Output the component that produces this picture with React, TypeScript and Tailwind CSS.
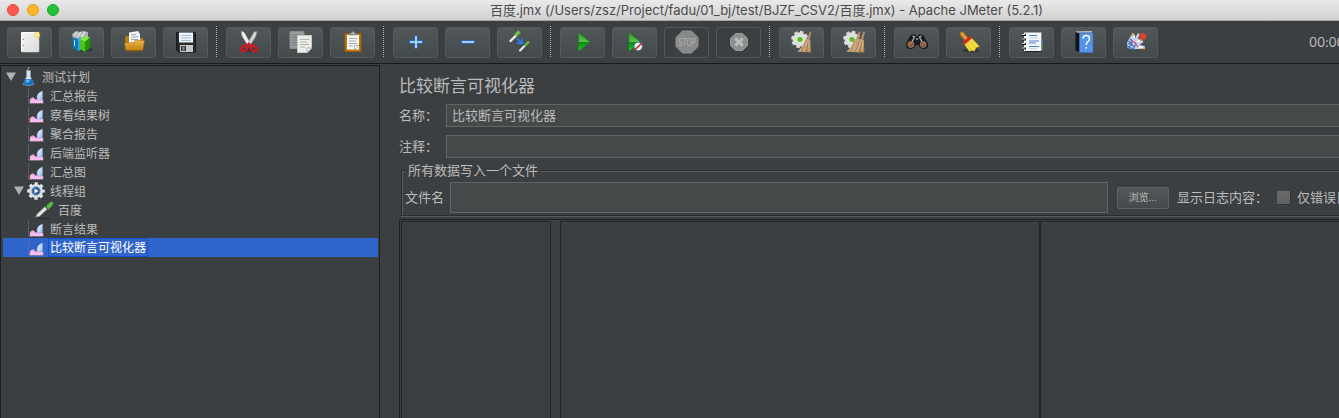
import React from "react";

const Svg = ({ w = 24, h = 24, children, className = "" }: { w?: number; h?: number; children: React.ReactNode; className?: string }) => (
  <svg width={w} height={h} viewBox={`0 0 ${w} ${h}`} className={`shrink-0 ${className}`}>{children}</svg>
);

const Defs = () => (
  <svg width="0" height="0" className="absolute">
    <defs>
      <linearGradient id="play" x1="0" y1="0" x2="0" y2="1">
        <stop offset="0" stopColor="#2f9c26" /><stop offset=".48" stopColor="#5cc04c" /><stop offset=".52" stopColor="#0b8a10" /><stop offset="1" stopColor="#18d420" />
      </linearGradient>
      <linearGradient id="folder" x1="0" y1="0" x2="0" y2="1">
        <stop offset="0" stopColor="#e9b446" /><stop offset="1" stopColor="#c07f0d" />
      </linearGradient>
      <linearGradient id="paper" x1="0" y1="0" x2="1" y2="1">
        <stop offset="0" stopColor="#f4f4f4" /><stop offset="1" stopColor="#dcdcdc" />
      </linearGradient>
      <linearGradient id="pink" x1="0" y1="0" x2="0" y2="1">
        <stop offset="0" stopColor="#ee9fe2" /><stop offset="1" stopColor="#fbcdf6" />
      </linearGradient>
      <linearGradient id="drop" x1="0" y1="0" x2="1" y2="1">
        <stop offset="0" stopColor="#ffffff" /><stop offset="1" stopColor="#8fb4ee" />
      </linearGradient>
      <linearGradient id="bristle" x1="0" y1="0" x2="1" y2="1">
        <stop offset="0" stopColor="#a9825a" /><stop offset=".5" stopColor="#cfa97c" /><stop offset="1" stopColor="#a27a50" />
      </linearGradient>
      <radialGradient id="glow"><stop offset="0" stopColor="#fffde0" /><stop offset=".6" stopColor="#f0dc5c" /><stop offset="1" stopColor="#f0dc5c" stopOpacity=".1" /></radialGradient>
    </defs>
  </svg>
);

const NewIcon = () => (
  <Svg><path d="M3.500 2.500h17v19h-17z" fill="url(#paper)" stroke="#fff" /><path d="M21 3v19H4" fill="none" stroke="#a9a9a3" strokeWidth=".8" /><path d="M5 9.500h1M5 15.500h1" stroke="#777" /><circle cx="19" cy="5" r="3.700" fill="url(#glow)" /></Svg>
);
const TemplatesIcon = () => (
  <Svg><ellipse cx="15" cy="19.500" rx="8" ry="2.500" fill="#292c2d" opacity=".5" />
    <path d="M2 4l4-3 4 1 3-1 5 1v6l-6 2-9-1z" fill="#aab0b2" /><path d="M4 6l3-4M7 7l4-5M11 7l4-5" stroke="#e2e4e4" strokeWidth="1.300" />
    <path d="M2 7l6 2v12l-5-3z" fill="#0f75b5" /><path d="M8 9l4-2v12l-4 2z" fill="#35a4e0" /><path d="M4 10l1 .4v6L4 16z" fill="#bfe4f8" />
    <path d="M10 9.500l5 2v10.500l-5-3z" fill="#4cc418" /><path d="M15 11.500l5-4v10L15 22z" fill="#219306" /><path d="M10 9.500l4-4 6 2-5 4z" fill="#8be34c" /></Svg>
);
const OpenIcon = () => (
  <Svg><path d="M3 8q0-2 2-2h5l2 2h9v13H4z" fill="#bc7d13" /><path d="M7 2.500l9-1.500 2 3v9H7z" fill="#f1f3f4" /><path d="M9 5l5-.6M9 7.300l7-.6M9 9.500h7" stroke="#9da8ae" /><path d="M2.500 13l9-.5 1.500-2h9.500l-2 10.500H4z" fill="url(#folder)" stroke="#a87211" strokeWidth=".5" /><path d="M4 20.500h17" stroke="#8d5d09" /></Svg>
);
const SaveIcon = () => (
  <Svg><path d="M2.500 2.500h19v19.500h-17l-2-2z" fill="#2a2a2c" stroke="#17181a" /><path d="M5 2.500h14v10H5z" fill="#edf3fa" /><path d="M7 5.500h10M7 8h10M7 10.500h10" stroke="#9db8d5" strokeWidth=".9" /><path d="M6 15h13v7H6z" fill="#c6c8c8" /><path d="M7 16h5v5H7z" fill="#343638" /><path d="M8.500 16.500h2v4h-2z" fill="#88898a" /></Svg>
);
const CutIcon = () => (
  <Svg><ellipse cx="12" cy="20" rx="8" ry="2" fill="#2c2f30" opacity=".6" /><path d="M4.300 1.500q3 0 3.500 2l5.700 10-2.500 2L5 6z" fill="#f2f2f2" stroke="#aaa" strokeWidth=".5" /><path d="M19.700 1.500q-3 0-3.500 2l-5.700 10 2.500 2L19 6z" fill="#d3d3d3" stroke="#999" strokeWidth=".5" /><g fill="none" stroke="#dc151b" strokeWidth="2.200"><ellipse cx="7.300" cy="18.500" rx="3.200" ry="2.400" transform="rotate(-35 7.300 18.500)" /><ellipse cx="16.700" cy="18.500" rx="3.200" ry="2.400" transform="rotate(35 16.700 18.500)" /><path d="M9.500 16l2.500-2.200 2.500 2.200" /></g></Svg>
);
const CopyIcon = () => (
  <Svg><path d="M1 1.500h14v17H1z" fill="#999c9c" stroke="#888c8c" /><path d="M3 5h9M3 7.500h9M3 10h5M3 12.500h5M3 15h5" stroke="#747979" /><path d="M8.500 5.500h14v13l-4 4h-10z" fill="#edeeea" stroke="#cacbc6" /><path d="M11 9.500h9M11 12h7M11 14.500h9M11 17h5" stroke="#b4b5b1" /><path d="M18 22v-4h4.500z" fill="#fff" stroke="#888" strokeWidth=".6" /></Svg>
);
const PasteIcon = () => (
  <Svg><path d="M4 3.500h16v18H4z" fill="#be7a14" stroke="#9c5d08" /><path d="M6 5h12v14.500H6z" fill="#f6f6f4" /><path d="M8 8.500h8M8 11h7M8 13.500h8M8 16h4" stroke="#a8a8a5" /><path d="M13.500 19.500v-4H18z" fill="#fff" stroke="#777" strokeWidth=".5" /><path d="M8 5V3.500h2q0-2 2-2t2 2h2V5z" fill="#aaaba6" stroke="#696a66" strokeWidth=".6" /></Svg>
);
const PlusIcon = () => <Svg><path d="M12 5v14M5 12h14" stroke="#2b66b5" strokeWidth="4" /><path d="M12 6v12M6 12h12" stroke="#a5caf0" strokeWidth="2" /></Svg>;
const MinusIcon = () => <Svg><path d="M5 12h14" stroke="#2b66b5" strokeWidth="4" /><path d="M6 12h12" stroke="#a5caf0" strokeWidth="2" /></Svg>;
const ToggleIcon = () => (
  <Svg><path d="M2.500 11l6-6" stroke="#eef0e9" strokeWidth="2.300" strokeLinecap="round" /><path d="M7.500 5.500l4-4" stroke="#72bf4b" strokeWidth="3.500" /><path d="M12 20.500l5-5" stroke="#eef0e9" strokeWidth="2" strokeLinecap="round" /><path d="M16.500 16l4.500-4.500" stroke="#68ad49" strokeWidth="2.700" /><path d="M9 8.500l4.500 4.500M14 8.500v4.800h-5" fill="none" stroke="#2b7ce8" strokeWidth="1.800" /></Svg>
);
const Triangle = ({ x = 8 }: { x?: number }) => <path d={`M${x} 2.800l11.300 9.200-11.300 9.200z`} fill="url(#play)" stroke="#139212" strokeWidth=".7" />;
const PlayIcon = () => <Svg><Triangle x={7.500} /></Svg>;
const PlayNoIcon = () => <Svg><Triangle x={6} /><circle cx="15.200" cy="16.500" r="4.200" fill="#f0f5fa" stroke="#3673b7" strokeWidth="1" /><path d="M11.800 19.900l6.900-6.800" stroke="#d42b25" strokeWidth="1.500" /></Svg>;
const StopIcon = () => <Svg><path d="M7.500 1h9l6.500 6.500v9L16.500 23h-9L1 16.500v-9z" fill="#888989" stroke="#929393" /><text x="3" y="16" fontSize="11.500" textLength="18" lengthAdjust="spacingAndGlyphs" fontFamily="Liberation Sans, sans-serif" fill="#b2b3b3">STOP</text></Svg>;
const ShutdownIcon = () => <Svg><path d="M8.500 3.500h7l5 5v7l-5 5h-7l-5-5v-7z" fill="#8d8e8e" stroke="#999a9a" /><path d="M8.300 8.300l7.400 7.400M15.700 8.300l-7.400 7.400" stroke="#bcbdbd" strokeWidth="3" /></Svg>;
const Broom = ({ x = 0 }: { x?: number }) => <g transform={`translate(${x} 0)`}><path d="M19.800 1.500l1.700.3-2 8.500-2.500-.5z" fill="#b08f68" /><path d="M15.500 9l4.700 1 .8 12.500-13.500-.7q5.500-5 8-12.800z" fill="url(#bristle)" /><path d="M16.500 11l-5 11M18.500 11l-2.500 11" stroke="#8b6843" strokeWidth=".6" /><path d="M17 11l-3.500 11M19 11l-.3 11" stroke="#e0c095" strokeWidth=".6" /></g>;
const BroomGear = () => <><circle cx="9.800" cy="9.500" r="7.400" fill="none" stroke="#d7d9d9" strokeWidth="2.600" strokeDasharray="3.400 2.412" /><circle cx="9.800" cy="9.500" r="7.200" fill="#dcdddd" /><circle cx="10" cy="9.500" r="3.300" fill="#62bb24" stroke="#f0f8e9" /></>;
const ClearIcon = () => <Svg><BroomGear /><Broom /></Svg>;
const ClearAllIcon = () => <Svg><BroomGear /><Broom x={-3} /><Broom x={1.500} /></Svg>;
const SearchIcon = () => (
  <Svg><path d="M7 4.500l3 0 2 2.500 2-2.500 3 0 2 1.500 4 8q.5 5-4.500 5-3.500 0-5-4h-3q-1.500 4-5 4-5 0-4.500-5l4-8z" fill="#17181a" /><path d="M7.500 6l2 1-2.500 5M16.500 6l-2 1 2.500 5M11 9h2" fill="none" stroke="#a4a6a8" strokeWidth="1.500" /><circle cx="5.800" cy="14.500" r="2.900" fill="#8b4f2a" stroke="#8d8885" /><circle cx="18.200" cy="14.500" r="2.900" fill="#8b4f2a" stroke="#8d8885" /><path d="M4 15l3-2M17 15l3-2" stroke="#de8340" /></Svg>
);
const BrushIcon = () => (
  <Svg><ellipse cx="14" cy="20.500" rx="8" ry="2" fill="#292c2d" opacity=".6" /><path d="M5 4l5 6" stroke="#bd7b1a" strokeWidth="4.500" strokeLinecap="round" /><path d="M4.500 3l5 6" stroke="#e4ae51" strokeWidth="1.500" /><path d="M14 7.500l8.500 9-3.500 1-1.500 3.500-3-.5-2 1-6-8.500z" fill="#f2de45" stroke="#d3b51a" strokeWidth=".5" /><path d="M13 11l5 7M10 14l4 6" stroke="#d0b61f" strokeWidth=".8" /><path d="M6.500 13.500l7.500-6.500" stroke="#d82222" strokeWidth="3" /></Svg>
);
const FunctionIcon = () => (
  <Svg><path d="M20 9h3v6h-3z" fill="#2c71cc" /><path d="M20 15h3v5h-3z" fill="#27a516" /><path d="M5 3h17v19H5z" fill="#191b1c" /><path d="M4 2.500h17.500v18.500H4z" fill="#f5f6f7" /><path d="M9 5.500h8M9 11h10M9 13h7M9 16.500h10" stroke="#4a83d3" /><path d="M9 8h9M9 18.800h8" stroke="#aabbd2" strokeWidth=".7" /><path d="M2 5h4M2 9.500h4M2 14h4M2 18.500h4" stroke="#111" strokeWidth="2.200" /><path d="M2 4.500h3M2 9h3M2 13.500h3M2 18h3" stroke="#ddd" /></Svg>
);
const HelpIcon = () => (
  <Svg><path d="M3.500 2.500h5v20l-5-2z" fill="#111317" /><path d="M4 1.500l16-.3v1.300H5z" fill="#e7e9ec" /><path d="M7.500 3h13.500v19.500H7.500z" fill="#5593e4" stroke="#3c73bb" strokeWidth=".7" /><path d="M11 8.500q.2-3 3.300-3t3.200 3q0 2-1.700 3.200-1.500 1-1.500 3.300M14.300 17v1.800" fill="none" stroke="#fff" strokeWidth="1.400" /></Svg>
);
const RecordIcon = () => (
  <Svg><path d="M5 9l3-5 2-1 1 5 3-5 1.500 1-1.500 5 4 1 1.500 2-4 3 5.500 1-.5 3H8l-4.500-1L3 13z" fill="#c3d0ee" /><path d="M3 16l8 4M4 13l7 4M5 18l3-6M9 20l3-7M4.500 11l4 3M6 9l3 3" stroke="#3f6cba" strokeWidth="1.100" /><path d="M8 11l4 2M11 13l3 4" stroke="#dc4661" strokeWidth="1.100" /><path d="M10 5v3M13 12l4-2M15 17h4" stroke="#fff" strokeWidth="1.500" /><path d="M9 3v3M16 10.500l2-.5M18.500 18.500h2.500" stroke="#eea02e" strokeWidth="1.500" /><circle cx="18.700" cy="6.500" r="3.400" fill="#d9462e" /></Svg>
);

const groups: { Icon: React.FC; off?: boolean }[][] = [
  [{ Icon: NewIcon }, { Icon: TemplatesIcon }, { Icon: OpenIcon }, { Icon: SaveIcon }],
  [{ Icon: CutIcon }, { Icon: CopyIcon }, { Icon: PasteIcon }],
  [{ Icon: PlusIcon }, { Icon: MinusIcon }, { Icon: ToggleIcon }],
  [{ Icon: PlayIcon }, { Icon: PlayNoIcon }, { Icon: StopIcon, off: true }, { Icon: ShutdownIcon, off: true }],
  [{ Icon: ClearIcon }, { Icon: ClearAllIcon }],
  [{ Icon: SearchIcon }, { Icon: BrushIcon }],
  [{ Icon: FunctionIcon }, { Icon: HelpIcon }, { Icon: RecordIcon }],
];

const Listener = () => (
  <Svg w={16} h={16}><path d="M.5 0v15.500H15.500" fill="none" stroke="#77797b" strokeDasharray="1 1" /><path d="M2 15v-3.500l2-2 2 .5 2 2 3-2 4 2v3z" fill="url(#pink)" stroke="#e09ad8" strokeWidth=".5" /><path d="M9 9q.5-4.500 5.500-6v7.500q-2 2.500-4 1.500T9 9z" fill="url(#drop)" stroke="#83a8dc" strokeWidth=".5" /></Svg>
);
const Flask = () => (
  <Svg w={13} h={19}><path d="M5 5l1-3 1.500-2" stroke="#aaa" fill="none" /><path d="M4.500 3.500h4v6l3.500 8q-5.500 2-11 0l3.500-8z" fill="#d8e4eb" stroke="#8d999f" strokeWidth=".5" /><path d="M3 12h7l2 5.200q-5.500 2-11 0z" fill="#1b70c8" /><path d="M4.500 12.500h4l-2 3h-3z" fill="#67b6ee" /></Svg>
);
const TreeGear = () => (
  <Svg w={18} h={18}><circle cx="9" cy="9" r="7.500" fill="none" stroke="#e2e5e8" strokeWidth="2.600" strokeDasharray="3.200 2.690" strokeDashoffset="1.600" /><circle cx="9" cy="9" r="7" fill="#dfe3e7" /><circle cx="9" cy="9" r="4.500" fill="#315e98" stroke="#a5bedc" /><path d="M7.500 6.500l4 2.500-4 2.500z" fill="#fff" /></Svg>
);
const Dropper = () => (
  <Svg w={19} h={18}><path d="M3 17.500h12" stroke="#292c2d" /><path d="M.5 16l1.500-3 8-7.500 2.500 2.500-8 7.500z" fill="#e2e4e0" stroke="#767a78" strokeWidth=".6" /><path d="M9.500 4l5 5" stroke="#2d5d25" strokeWidth="2" /><path d="M11 5.500l3-3.500q2-2 4-1 1 2-1 4l-3.500 3.500z" fill="#64b44e" stroke="#356d2c" strokeWidth=".5" /></Svg>
);
const Arrow = () => <Svg w={10} h={9}><path d="M0 .5h10L5 9z" fill="#afb1b3" /></Svg>;

const rows: { label: string; kind: "plan" | "listener" | "group" | "sampler"; selected?: boolean }[] = [
  { label: "测试计划", kind: "plan" },
  { label: "汇总报告", kind: "listener" },
  { label: "察看结果树", kind: "listener" },
  { label: "聚合报告", kind: "listener" },
  { label: "后端监听器", kind: "listener" },
  { label: "汇总图", kind: "listener" },
  { label: "线程组", kind: "group" },
  { label: "百度", kind: "sampler" },
  { label: "断言结果", kind: "listener" },
  { label: "比较断言可视化器", kind: "listener", selected: true },
];

const leads = {
  plan: <div className="flex w-[37px] items-center gap-[6px] pl-[3px]"><Arrow /><Flask /></div>,
  listener: <div className="flex h-full w-[45px] items-start pt-[2px] pl-[25px]"><Listener /></div>,
  group: <div className="flex w-[45px] items-center gap-[3px] pl-[11px]"><Arrow /><TreeGear /></div>,
  sampler: <div className="flex w-[53px] items-center pl-8"><Dropper /></div>,
};

const field = "h-[23px] border border-[#646464] bg-[#45494a]";

export default function App() {
  return (
    <div className="flex h-[418px] w-[1339px] flex-col overflow-hidden bg-[#3c3f41] font-['Liberation_Sans','Noto_Sans_CJK_SC',sans-serif] text-[13px] whitespace-nowrap text-[#bbbbbb]">
      <Defs />
      <header className="grid h-[21px] shrink-0 grid-cols-[490px_1fr] items-center border-b border-[#a6a6a6] bg-linear-to-b from-[#e9e9e9] to-[#d1d1d1]">
        <div className="flex gap-2 pl-[7px]">
          <i className="size-3 rounded-full border border-[#e2463f] bg-[#ff5952]" />
          <i className="size-3 rounded-full border border-[#e1a116] bg-[#ffb429]" />
          <i className="size-3 rounded-full border border-[#12ac28] bg-[#25c138]" />
        </div>
        <svg width="560" height="20" className="font-['Inter','Noto_Sans_CJK_SC',sans-serif]">
          <text x="0" y="15" textLength="553" fontSize="13" fill="#4b4b4b">百度.jmx (/Users/zsz/Project/fadu/01_bj/test/BJZF_CSV2/百度.jmx) - Apache JMeter (5.2.1)</text>
        </svg>
      </header>
      <nav className="flex h-[43px] shrink-0 items-center border-b border-[#17191a] pl-[7px]">
        {groups.map((g, i) => (
          <React.Fragment key={i}>
            {i > 0 && <div className="w-[18px] shrink-0 pl-2"><div className="h-8 w-px bg-[repeating-linear-gradient(#b0b2b3_0_1px,transparent_1px_2px)]" /></div>}
            <div className="flex shrink-0 gap-[7px]">
              {g.map(({ Icon, off }, j) => (
                <button key={j} className={`flex h-[31px] w-[45px] items-center justify-center rounded-[3px] border ${off ? "border-[#55585a]" : "border-[#565a5c] bg-linear-to-b from-[#525759] to-[#44494b]"}`}><Icon /></button>
              ))}
            </div>
          </React.Fragment>
        ))}
        <span className="ml-[151px] pt-px font-['Inter',sans-serif] text-[13px] tracking-[-0.2px]">00:00:00</span>
      </nav>
      <main className="flex min-h-0 flex-1">
        <aside className="mt-px w-[380px] shrink-0 border border-b-0 border-[#1e2021] pt-px pr-px pl-[2px]">
          {rows.map((r) => (
            <div key={r.label} className={`flex h-[19px] items-center text-[12px] ${r.selected ? "bg-[#2f65ca] text-white" : ""}`}>
              {leads[r.kind]}
              <span className={`h-[19px] border px-px ${r.selected ? "border-[#1552d4] leading-[19px]" : "border-transparent leading-[20px]"}`}>{r.label}</span>
            </div>
          ))}
        </aside>
        <section className="flex min-w-0 flex-1 flex-col pl-[19px]">
          <h1 className="mt-[9px] h-[27px] text-[17px] leading-[27px]">比较断言可视化器</h1>
          <div className="mt-[4px] flex h-[23px] items-center">
            <label className="w-[47px]">名称：</label><div className={`${field} flex-1 border-r-0 pl-[5px] leading-[22px]`}>比较断言可视化器</div>
          </div>
          <div className="mt-[8px] flex h-[23px] items-center">
            <label className="w-[47px]">注释：</label><div className={`${field} flex-1 border-r-0`} />
          </div>
          <div className="mt-[3px] ml-[2px] shrink-0">
            <div className="flex h-[18px] items-end">
              <i className="h-[9px] w-[5px] border-t border-l border-[#2a2c2e] shadow-[inset_1px_1px_0_#585b5d]" />
              <span className="h-[18px] px-[2px] leading-[20px]">所有数据写入一个文件</span>
              <i className="h-[9px] flex-1 border-t border-[#2a2c2e] shadow-[inset_0_1px_0_#585b5d]" />
            </div>
            <div className="flex h-[37px] items-start border-b border-l border-[#2a2c2e] pt-[3px] pl-[3px] shadow-[inset_1px_0_0_#585b5d,0_1px_0_#585b5d]">
              <div className="flex h-[31px] items-center">
                <label className="w-[45px] shrink-0">文件名</label>
                <div className="h-[31px] w-[658px] shrink-0 border border-[#646464] bg-[#45494a]" />
                <button className="ml-[9px] h-[22px] w-[52px] shrink-0 rounded-[2px] border border-[#5d6163] bg-linear-to-b from-[#525759] to-[#44494b] text-[10px]">浏览...</button>
                <span className="ml-2 w-[100px] shrink-0">显示日志内容：</span>
                <i className="size-[14px] shrink-0 border-r border-b border-[#303234] bg-linear-to-b from-[#6a6a6a] to-[#606060]" />
                <span className="ml-[6px]">仅错误日志</span>
              </div>
            </div>
          </div>
          <div className="mt-[3px] flex min-h-0 flex-1 border-t border-l border-[#1e2021] pt-px pl-px">
            <div className="w-[150px] shrink-0 border border-b-0 border-[#232526]" />
            <div className="ml-[9px] w-[481px] shrink-0 border border-r-2 border-b-0 border-[#232526]" />
            <div className="flex-1 border-t border-[#232526]" />
          </div>
        </section>
      </main>
    </div>
  );
}
